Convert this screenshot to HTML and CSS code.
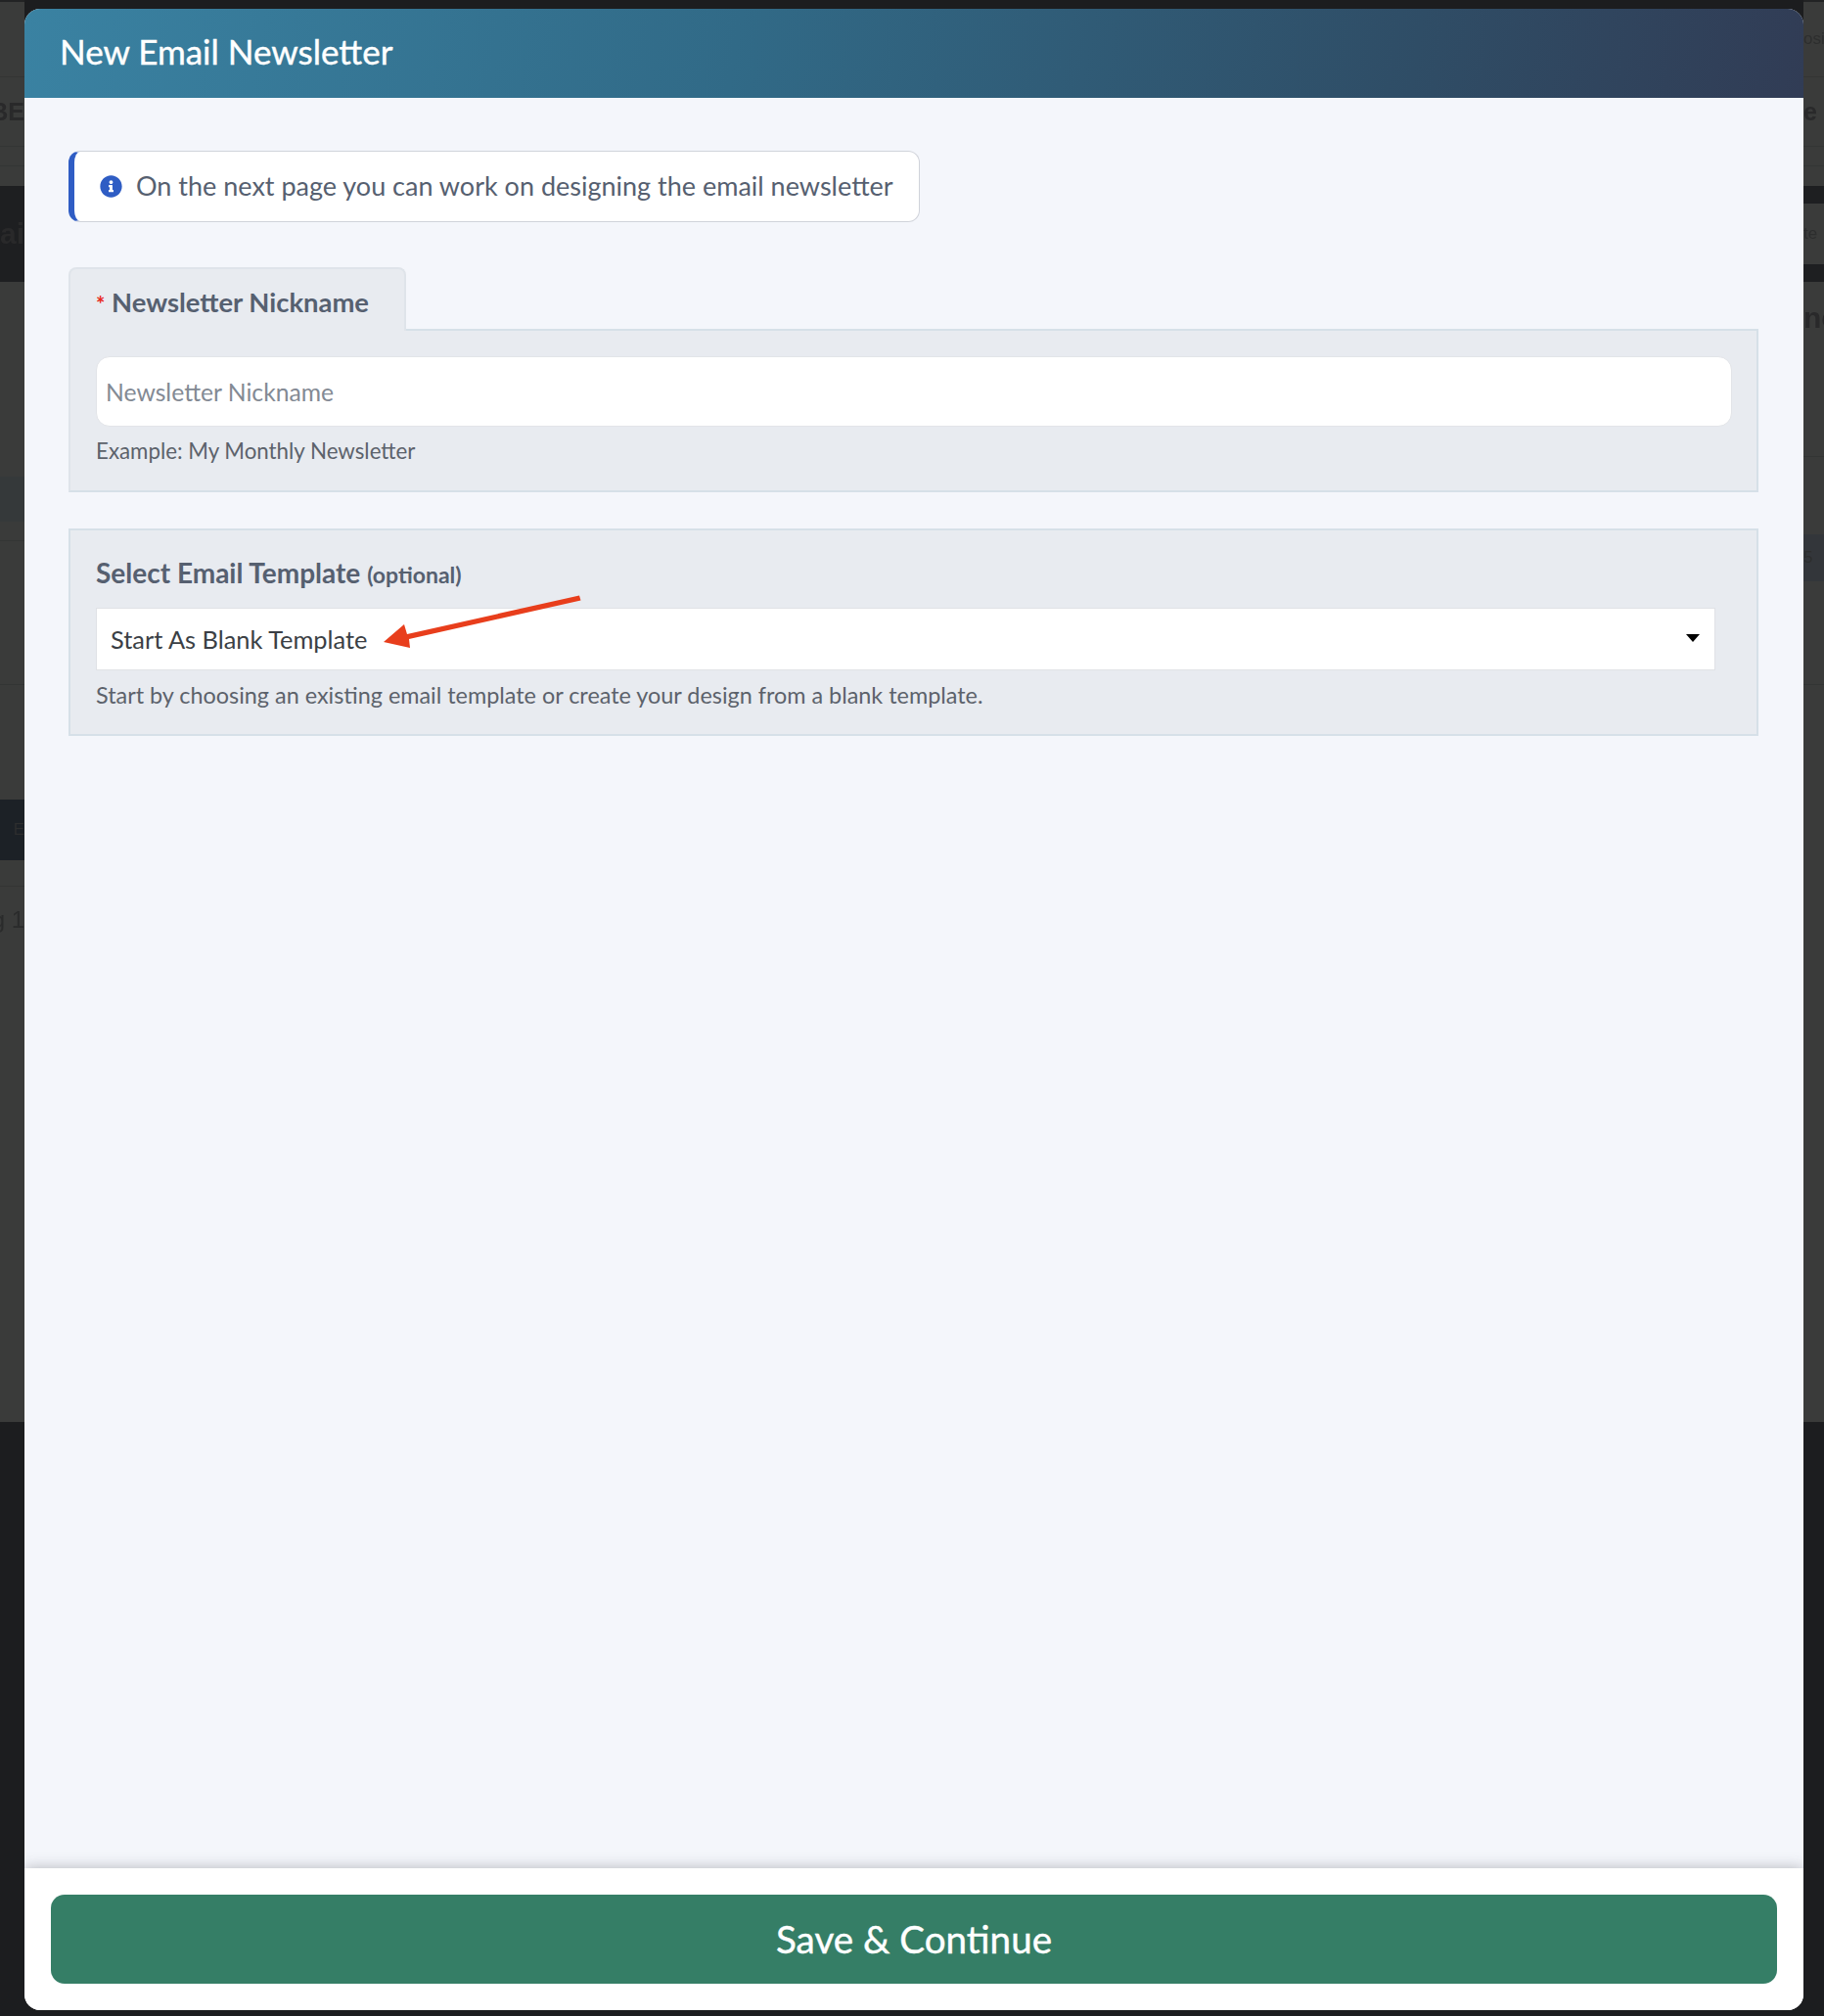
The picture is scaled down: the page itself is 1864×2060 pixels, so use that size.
FILE: index.html
```html
<!DOCTYPE html>
<html lang="en">
<head>
    <meta charset="UTF-8">
    <title>New Email Newsletter</title>
    <link rel="stylesheet" href="styles.css">
</head>
<body>
    <!-- page behind the modal, only the edges show -->
    <div class="backdrop">
        <div class="strip strip-left">
            <div class="band band-top"></div>
            <div class="band b77 line"></div>
            <div class="band b71 line"><span class="ghost ghost-l">BE</span></div>
            <div class="band b20 line"></div>
            <div class="band b20"></div>
            <div class="band b98 dark"><span class="ghost ghost-l ghost-big">ai</span></div>
            <div class="band b199"></div>
            <div class="band b46 teal"></div>
            <div class="band b20 line"></div>
            <div class="band b147 line"></div>
            <div class="band b117"></div>
            <div class="band b62 slate"><span class="ghost ghost-l ghost-small">E</span></div>
            <div class="band b27 line"></div>
            <div class="band b547"><span class="ghost ghost-l ghost-reg">g 1</span></div>
            <div class="band-end"></div>
        </div>
        <div class="strip strip-right">
            <div class="band band-top"></div>
            <div class="band b77 line"><span class="ghost ghost-small">osi</span></div>
            <div class="band b71 line"><span class="ghost">e</span></div>
            <div class="band b20 line"></div>
            <div class="band b20"></div>
            <div class="band b18 dark"></div>
            <div class="band b62"><span class="ghost ghost-small">te</span></div>
            <div class="band b18 dark"></div>
            <div class="band b179 line"><span class="ghost ghost-big ghost-high">ne</span></div>
            <div class="band b79"></div>
            <div class="band b48 grey"><span class="ghost ghost-small">5</span></div>
            <div class="band b106 line"></div>
            <div class="band b753"></div>
            <div class="band-end"></div>
        </div>
    </div>

    <div class="modal">
        <div class="modal-head">New Email Newsletter</div>

        <div class="modal-body">
            <div class="note">
                <svg class="note-icon" viewBox="0 0 512 512"><path d="M256 8C119.043 8 8 119.083 8 256c0 136.997 111.043 248 248 248s248-111.003 248-248C504 119.083 392.957 8 256 8zm0 110c23.196 0 42 18.804 42 42s-18.804 42-42 42-42-18.804-42-42 18.804-42 42-42zm56 254c0 6.627-5.373 12-12 12h-88c-6.627 0-12-5.373-12-12v-24c0-6.627 5.373-12 12-12h12v-64h-12c-6.627 0-12-5.373-12-12v-24c0-6.627 5.373-12 12-12h64c6.627 0 12 5.373 12 12v100h12c6.627 0 12 5.373 12 12v24z"/></svg>
                <span>On the next page you can work on designing the email newsletter</span>
            </div>

            <div class="tab"><span class="req">*</span> Newsletter Nickname</div>
            <div class="panel panel-first">
                <input class="i" type="text" placeholder="Newsletter Nickname">
                <div class="help help-first">Example: My Monthly Newsletter</div>
            </div>

            <div class="panel panel-second">
                <div class="label">Select Email Template <small>(optional)</small></div>
                <div class="sel">
                    <span>Start As Blank Template</span>
                    <i class="caret"></i>
                </div>
                <div class="help">Start by choosing an existing email template or create your design from a blank template.</div>
            </div>

            <!-- red arrow drawn on top of the screenshot -->
            <svg class="arrow" viewBox="0 0 210 70"><path d="M207 8.5 L208.5 13.5 L33 53 L34 62 L7 56 L28 38 L31 48 Z"/></svg>
        </div>

        <div class="modal-foot">
            <button class="save" type="button">Save &amp; Continue</button>
        </div>
    </div>
</body>
</html>
```

FILE: styles.css
```css
html, body {
    margin: 0;
    height: 2060px;
    overflow: hidden;
}
body {
    position: relative;
    box-sizing: border-box;
    padding: 9px 21px 6px 25px;
    background: #1c1d1f;
    font-family: "Lato", "Noto Sans", sans-serif;
    color: #566070;
}

/* background page */
.backdrop {
    position: absolute;
    top: 0;
    left: 0;
    right: 0;
    bottom: 0;
    display: flex;
    justify-content: space-between;
}
.strip {
    width: 25px;
    display: flex;
    flex-direction: column;
    overflow: hidden;
    background: #3a3b3a;
}
.strip-right {
    width: 21px;
}
.band {
    position: relative;
    flex: none;
    box-sizing: border-box;
    overflow: hidden;
}
.band-top { height: 2px; background: #222324; }
.band-end { flex: 1; background: #1c1d1f; }
.line { border-bottom: 1px solid #333534; }
.dark { background: #1e1f21; }
.teal { background: #35393a; }
.grey { background: #33363a; }
.slate { background: #1c2126; }
.b18 { height: 18px; }
.b20 { height: 20px; }
.b27 { height: 27px; }
.b46 { height: 46px; }
.b48 { height: 48px; }
.b62 { height: 62px; }
.b71 { height: 71px; }
.b77 { height: 77px; }
.b79 { height: 79px; }
.b98 { height: 98px; }
.b106 { height: 106px; }
.b117 { height: 117px; }
.b147 { height: 147px; }
.b179 { height: 179px; }
.b199 { height: 199px; }
.b547 { height: 547px; }
.b753 { height: 753px; }

.ghost {
    position: absolute;
    left: 0;
    top: 50%;
    transform: translateY(-50%);
    font-family: "Liberation Sans", sans-serif;
    font-size: 25px;
    font-weight: bold;
    color: #29292a;
    white-space: nowrap;
    filter: blur(0.6px);
}
.ghost-l { left: auto; right: 0; }
.ghost-big { font-size: 30px; }
.ghost-high { top: 20px; transform: none; }
.ghost-small { font-size: 17px; font-weight: normal; color: #2d2e2e; }
.ghost-reg { top: 20px; transform: none; font-size: 24px; font-weight: normal; color: #2a2b2b; }

/* modal */
.modal {
    position: relative;
    height: 2045px;
    display: flex;
    flex-direction: column;
    border-radius: 16px;
    overflow: hidden;
    background: #f4f6fb;
}
.modal-head {
    height: 91px;
    flex: none;
    box-sizing: border-box;
    padding: 0 0 5px 36px;
    display: flex;
    align-items: center;
    background: linear-gradient(100deg, #3a82a2 0%, #316a87 40%, #2f4d66 78%, #313c55 100%);
    color: #fff;
    font-size: 35px;
    -webkit-text-stroke: 0.4px #fff;
}
.modal-body {
    position: relative;
    flex: 1;
    padding: 54px 46px 0 45px;
}

.note {
    box-sizing: border-box;
    width: 870px;
    height: 73px;
    padding: 0 0 3px 26px;
    display: flex;
    align-items: center;
    gap: 14px;
    background: #fff;
    border: 1px solid #d0d3da;
    border-left: 6px solid #2f5dc4;
    border-radius: 12px;
    font-size: 27px;
    color: #566070;
}
.note-icon {
    width: 23px;
    height: 23px;
    flex: none;
    margin-top: 3px;
    fill: #2f5dc4;
}

.tab {
    box-sizing: border-box;
    width: 345px;
    height: 65px;
    margin-top: 46px;
    padding: 18px 0 0 26px;
    background: #e8ebf0;
    border: 2px solid #dfe4ea;
    border-bottom: 0;
    border-radius: 8px 8px 0 0;
    position: relative;
    z-index: 1;
    font-size: 27.4px;
    line-height: 32px;
    font-weight: bold;
    white-space: nowrap;
}
.req {
    color: #e8281c;
    font-size: 22px;
}
.panel {
    box-sizing: border-box;
    width: 1727px;
    padding: 0 26px;
    background: #e8ebf0;
    border: 2px solid #d6e0e8;
}
.panel-first {
    height: 167px;
    margin-top: -2px;
    padding-top: 26px;
    border-left-color: #dfe4ea;
}
.panel-second {
    height: 212px;
    margin-top: 37px;
    padding-top: 25px;
}
.i {
    display: block;
    box-sizing: border-box;
    width: 1672px;
    height: 72px;
    padding: 0 9px;
    background: #fff;
    border: 1px solid #e2e4e8;
    border-radius: 14px;
    font-family: inherit;
    font-size: 24.7px;
    outline: none;
}
.i::placeholder {
    color: #838a94;
    opacity: 1;
}
.help {
    margin-top: 11px;
    font-size: 23.4px;
    line-height: 28px;
    color: #5c626b;
    white-space: nowrap;
}
.help-first {
    margin-top: 11px;
    font-size: 22.3px;
}
.label {
    font-size: 28px;
    line-height: 36px;
    font-weight: bold;
    color: #566070;
}
.label small {
    font-size: 23px;
}
.sel {
    box-sizing: border-box;
    width: 1655px;
    height: 64px;
    margin-top: 16px;
    display: flex;
    align-items: center;
    justify-content: space-between;
    padding: 0 15px 0 14px;
    background: #fff;
    border: 1px solid #e0e2e6;
    font-size: 25.4px;
    color: #3b3f45;
}
.caret {
    width: 0;
    height: 0;
    margin-bottom: 3px;
    border-top: 8px solid #000;
    border-left: 7px solid transparent;
    border-right: 7px solid transparent;
}

.arrow {
    position: absolute;
    left: 360px;
    top: 500px;
    width: 210px;
    height: 70px;
    fill: #e83e1c;
}

.modal-foot {
    height: 145px;
    flex: none;
    box-sizing: border-box;
    padding: 27px 27px;
    background: #fff;
    box-shadow: 0 0 14px rgba(60, 60, 70, 0.35);
    position: relative;
}
.save {
    display: block;
    width: 100%;
    height: 91px;
    padding-bottom: 3px;
    border: 0;
    border-radius: 14px;
    background: #357e66;
    color: #fff;
    font-family: inherit;
    font-size: 38.6px;
    -webkit-text-stroke: 0.4px #fff;
}
```
